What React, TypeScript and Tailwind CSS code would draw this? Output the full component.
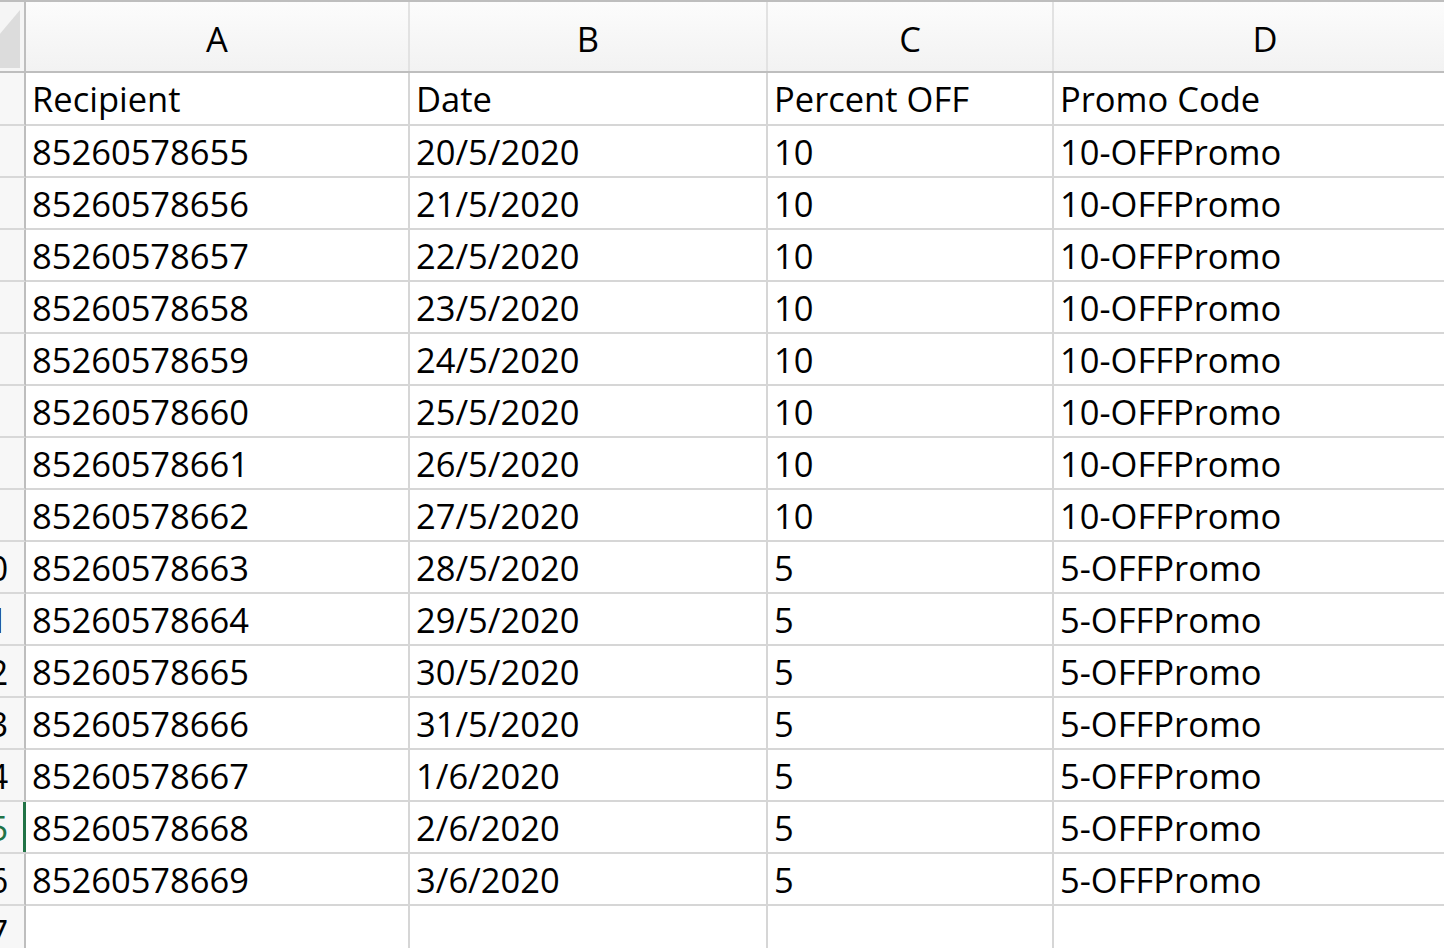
import React from "react";

const recipients = Array.from({ length: 15 }, (_, i) => String(85260578655 + i));
const dates = [
  "20/5/2020", "21/5/2020", "22/5/2020", "23/5/2020", "24/5/2020", "25/5/2020",
  "26/5/2020", "27/5/2020", "28/5/2020", "29/5/2020", "30/5/2020", "31/5/2020",
  "1/6/2020", "2/6/2020", "3/6/2020",
];

const dataRows: string[][] = [
  ["Recipient", "Date", "Percent OFF", "Promo Code"],
  ...recipients.map((r, i) => [r, dates[i], i < 8 ? "10" : "5", i < 8 ? "10-OFFPromo" : "5-OFFPromo"]),
  ["", "", "", ""],
];

const widths = ["w-[384px]", "w-[358px]", "w-[286px]", "w-[424px]"];
const letters = ["A", "B", "C", "D"];

export default function App() {
  return (
    <div
      className="w-[1444px] h-[948px] overflow-hidden bg-white text-black"
      style={{ fontFamily: '"Open Sans", "Noto Sans", sans-serif' }}
    >
      <div className="-ml-[47px] w-max">
        {/* Column header row */}
        <div className="flex h-[73px] border-t-2 border-b-2 border-[#bebebe] bg-linear-to-b from-[#fcfcfc] to-[#f2f2f2]">
          <div className="w-[73px] shrink-0 border-r-2 border-[#bebebe] bg-[#f5f5f5]">
            <svg width="71" height="69" viewBox="0 0 71 69" className="block">
              <polygon points="67,8 67,66 18,66" fill="#dcdcdc" />
            </svg>
          </div>
          {letters.map((l, i) => (
            <div
              key={l}
              className={`${widths[i]} shrink-0 border-r-2 border-[#e2e2e2] flex items-center justify-center pt-[3px] text-[34.5px] leading-[47px]`}
            >
              {l}
            </div>
          ))}
        </div>
        {/* Body rows */}
        {dataRows.map((row, r) => {
          const num = r + 1;
          const selected = num === 15;
          return (
            <div key={r} className={`flex ${r === 0 ? "h-[53px]" : "h-[52px]"}`}>
              <div
                className={`relative w-[73px] shrink-0 border-r-2 border-b-2 border-r-[#bebebe] border-b-[#d8d8d8] bg-[#f7f7f7] flex items-end justify-center pb-[1px] text-[34.5px] leading-[47px] ${
                  selected ? "text-[#217346]" : "text-black"
                }`}
              >
                {num}
                {selected && (
                  <span className="absolute -right-[2px] top-0 bottom-0 w-[3px] bg-[#217346]" />
                )}
              </div>
              {row.map((cell, c) => (
                <div
                  key={c}
                  className={`${widths[c]} shrink-0 border-r-2 border-b-2 border-[#d6d6d6] flex items-end pl-[6px] ${r === 0 ? "pb-[2px]" : "pb-[1px]"} text-[34.5px] leading-[47px] whitespace-nowrap overflow-hidden`}
                >
                  {cell}
                </div>
              ))}
            </div>
          );
        })}
      </div>
    </div>
  );
}
